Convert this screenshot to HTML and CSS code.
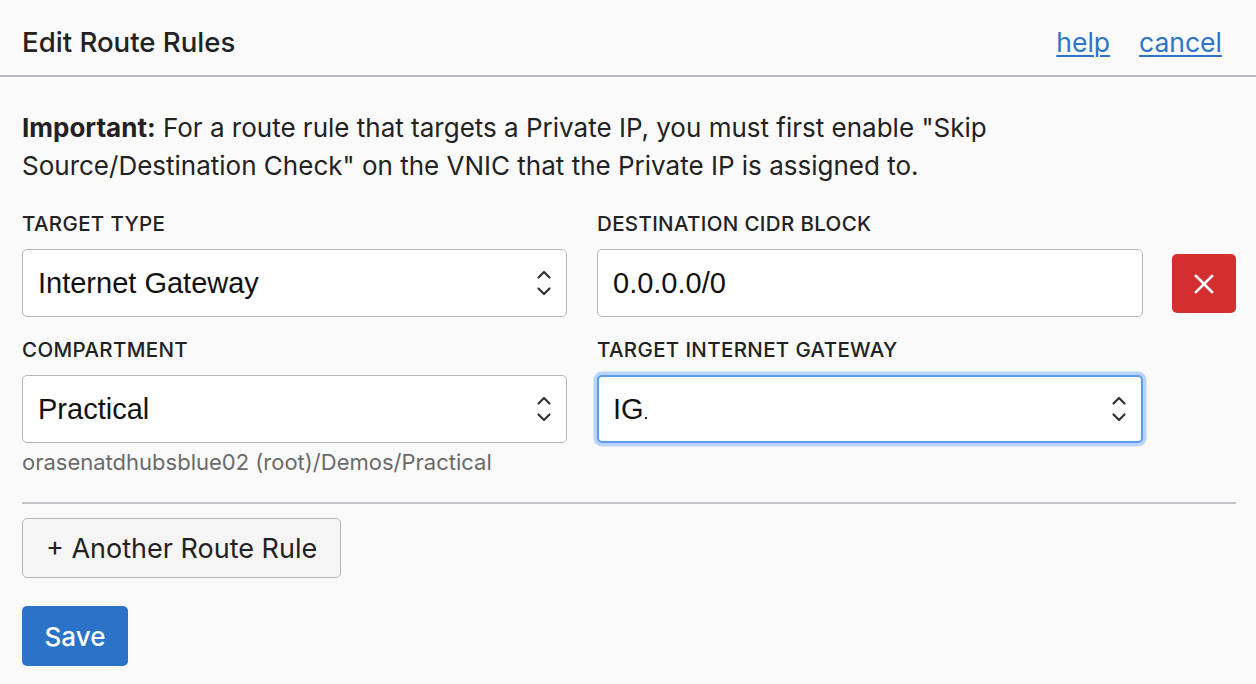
FILE: index.html
```html
<!DOCTYPE html>
<html>
<head>
<meta charset="utf-8">
<link rel="stylesheet" href="styles.css">
</head>
<body>
<div class="panel">
  <header class="header">
    <h1 class="title">Edit Route Rules</h1>
    <nav class="links">
      <a href="#" class="link">help</a>
      <a href="#" class="link">cancel</a>
    </nav>
  </header>
  <main class="content">
    <p class="notice"><strong>Important:</strong> For a route rule that targets a Private IP, you must first enable "Skip Source/Destination Check" on the VNIC that the Private IP is assigned to.</p>
    <div class="rule">
      <div class="field">
        <label class="label">TARGET TYPE</label>
        <div class="select"><span class="value">Internet Gateway</span>
          <svg class="chev" width="16" height="30" viewBox="0 0 16 30"><path d="M2.5 9.5 L8 4 L13.5 9.5" fill="none" stroke="#333" stroke-width="2.2" stroke-linecap="round" stroke-linejoin="round"/><path d="M2.5 20.5 L8 26 L13.5 20.5" fill="none" stroke="#333" stroke-width="2.2" stroke-linecap="round" stroke-linejoin="round"/></svg>
        </div>
      </div>
      <div class="field">
        <label class="label">DESTINATION CIDR BLOCK</label>
        <div class="input"><span class="value">0.0.0.0/0</span></div>
      </div>
      <button class="delete" aria-label="remove">
        <svg width="22" height="22" viewBox="0 0 22 22"><path d="M3 3 L19 19 M19 3 L3 19" stroke="#fff" stroke-width="2.6" stroke-linecap="square"/></svg>
      </button>
      <div class="field">
        <label class="label">COMPARTMENT</label>
        <div class="select"><span class="value">Practical</span>
          <svg class="chev" width="16" height="30" viewBox="0 0 16 30"><path d="M2.5 9.5 L8 4 L13.5 9.5" fill="none" stroke="#333" stroke-width="2.2" stroke-linecap="round" stroke-linejoin="round"/><path d="M2.5 20.5 L8 26 L13.5 20.5" fill="none" stroke="#333" stroke-width="2.2" stroke-linecap="round" stroke-linejoin="round"/></svg>
        </div>
        <div class="hint">orasenatdhubsblue02 (root)/Demos/Practical</div>
      </div>
      <div class="field">
        <label class="label">TARGET INTERNET GATEWAY</label>
        <div class="select focused"><span class="value">IG<span class="caret"></span></span>
          <svg class="chev" width="16" height="30" viewBox="0 0 16 30"><path d="M2.5 9.5 L8 4 L13.5 9.5" fill="none" stroke="#333" stroke-width="2.2" stroke-linecap="round" stroke-linejoin="round"/><path d="M2.5 20.5 L8 26 L13.5 20.5" fill="none" stroke="#333" stroke-width="2.2" stroke-linecap="round" stroke-linejoin="round"/></svg>
        </div>
      </div>
    </div>
    <hr class="divider">
    <button class="btn-secondary">+ Another Route Rule</button>
    <div class="actions">
      <button class="btn-primary">Save</button>
    </div>
  </main>
</div>
</body>
</html>
```

FILE: styles.css
```css
html, body {
  margin: 0;
  padding: 0;
  background: #fafafa;
}
body {
  font-family: Inter, "Noto Sans", sans-serif;
  color: #222;
  width: 1256px;
  height: 684px;
  overflow: hidden;
}
.header {
  box-sizing: border-box;
  height: 77px;
  border-bottom: 2px solid #b7bbc0;
  display: flex;
  align-items: center;
  justify-content: space-between;
  padding: 8px 34px 0 22px;
}
.title {
  margin: 0;
  font-size: 27.6px;
  font-weight: 500;
  color: #222;
}
.links {
  display: flex;
  gap: 29px;
}
.link {
  font-size: 26.5px;
  color: #2c74c9;
  text-decoration: underline;
  text-underline-offset: 3px;
  text-decoration-thickness: 1.5px;
}
.content {
  padding: 0 20px 0 22px;
}
.notice {
  max-width: 1150px;
  margin: 32px 0 0 0;
  font-size: 26px;
  line-height: 38px;
  color: #222;
}
.notice strong {
  font-weight: 700;
}
.rule {
  display: grid;
  grid-template-columns: 545px 546px 64px;
  column-gap: 30px;
  row-gap: 21px;
  margin-top: 27px;
  align-items: start;
}
.rule .field:nth-child(4) {
  grid-column: 1;
}
.label {
  display: block;
  font-size: 20.5px;
  font-weight: 500;
  letter-spacing: 0.35px;
  color: #222;
  line-height: 24px;
  margin-bottom: 13px;
}
.select, .input {
  box-sizing: border-box;
  height: 68px;
  border: 1.5px solid #b3b7bc;
  border-radius: 5px;
  background: #fff;
  display: flex;
  align-items: center;
  justify-content: space-between;
  padding: 0 14px 0 15px;
}
.value {
  font-family: "Liberation Sans", Arial, sans-serif;
  font-size: 29px;
  color: #111;
}
.chev {
  flex: none;
}
.focused {
  border: 2.5px solid #5b9cee;
  box-shadow: 0 0 0 3.5px #b9d4f8;
  padding-left: 14px;
}
.caret {
  display: inline-block;
  width: 2px;
  height: 2px;
  background: #222;
  margin-left: 1px;
}
.hint {
  margin-top: 7px;
  font-size: 22px;
  color: #6a6a6a;
  line-height: 24px;
}
.delete {
  align-self: start;
  margin-top: 42px;
  width: 64px;
  height: 59px;
  border: none;
  border-radius: 5px;
  background: #d32f2f;
  display: flex;
  align-items: center;
  justify-content: center;
  padding: 0;
  margin-left: -1px;
}
.divider {
  border: none;
  border-top: 2px solid #c2c6ca;
  margin: 28px 0 0 0;
}
.btn-secondary {
  margin-top: 14px;
  height: 60px;
  padding: 0 23px;
  font-family: Inter, "Noto Sans", sans-serif;
  font-size: 27px;
  color: #222;
  background: #f5f5f5;
  border: 1.5px solid #b3b7bc;
  border-radius: 5px;
}
.actions {
  margin-top: 28px;
}
.btn-primary {
  height: 60px;
  width: 106px;
  padding: 0;
  font-family: Inter, "Noto Sans", sans-serif;
  font-size: 26px;
  font-weight: 500;
  color: #fff;
  background: #2b73c8;
  border: none;
  border-radius: 5px;
}
```
